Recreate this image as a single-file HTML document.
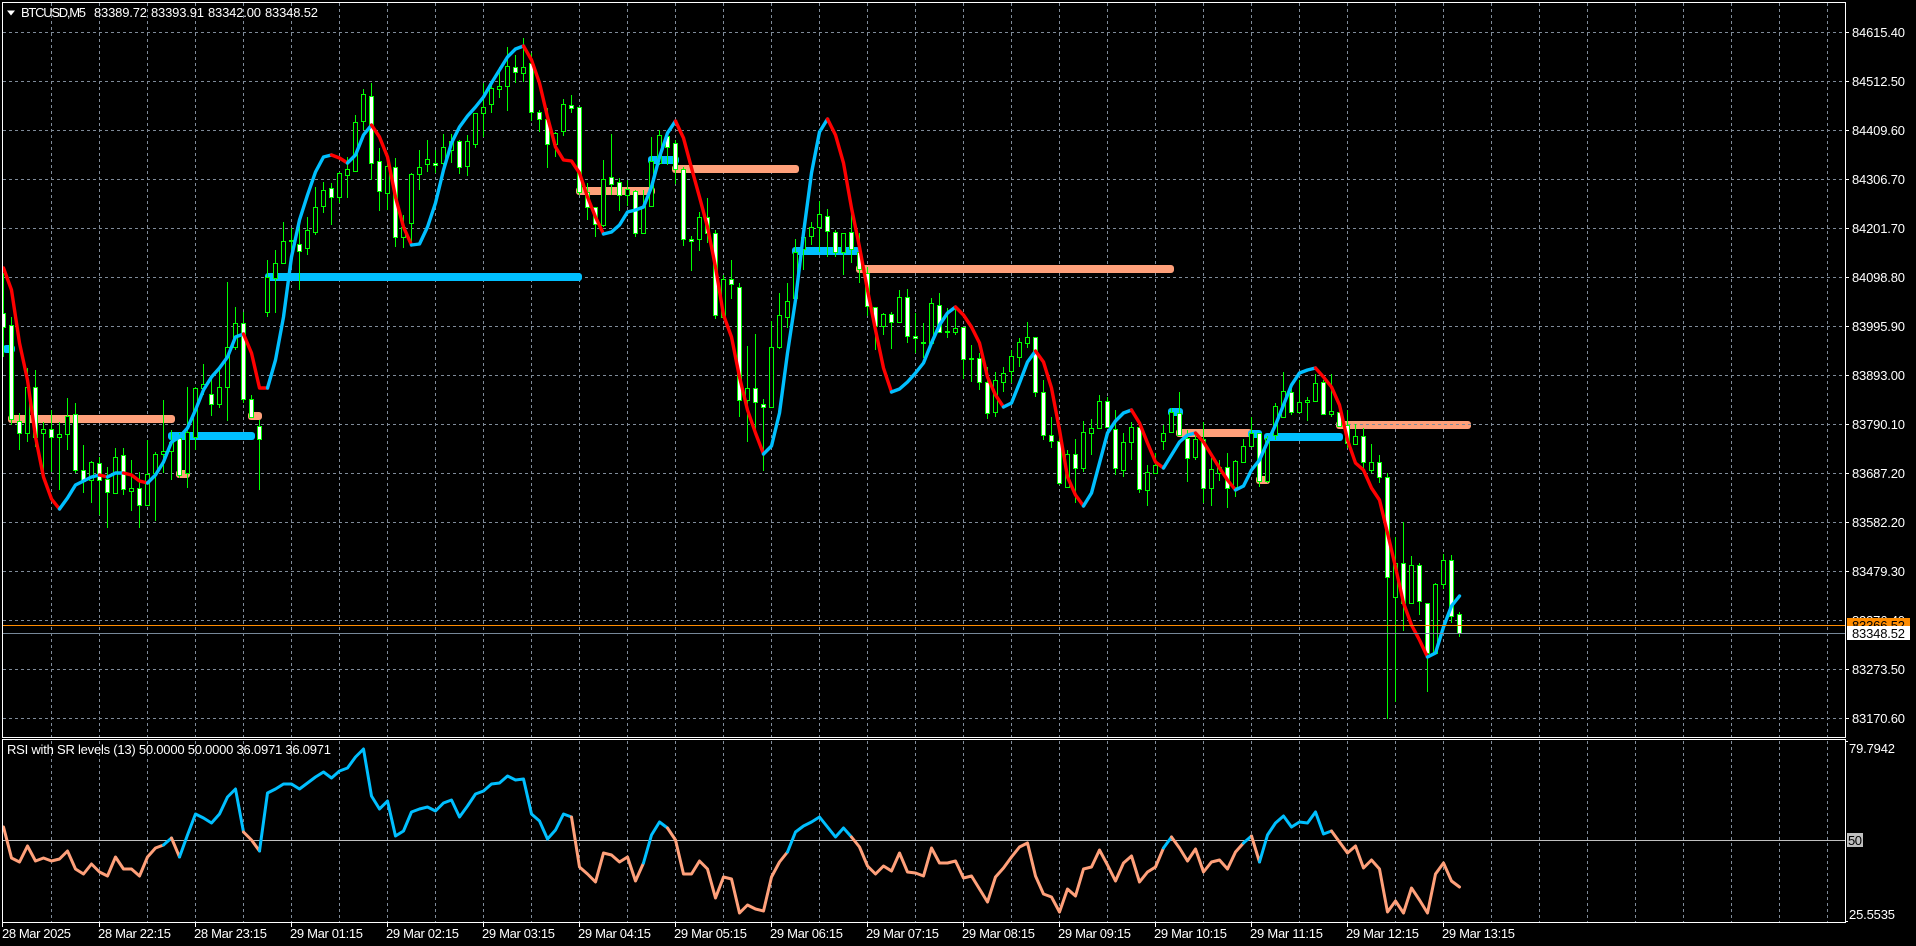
<!DOCTYPE html>
<html lang="en"><head><meta charset="utf-8"><title>BTCUSD,M5</title>
<style>
html,body{margin:0;padding:0;background:#000;width:1916px;height:946px;overflow:hidden}
svg{display:block}
text{font-family:"Liberation Sans",sans-serif;font-size:13px;fill:#fff}
.c{shape-rendering:crispEdges}
.l{fill:none;stroke-width:3.4;stroke-linejoin:round;stroke-linecap:round}
.r{stroke:#ff0000}.b{stroke:#00bfff}.s{stroke:#ffa07a}
.rs{fill:none;stroke-width:3;stroke-linejoin:round;stroke-linecap:round}
</style></head><body>
<svg width="1916" height="946" viewBox="0 0 1916 946" xmlns="http://www.w3.org/2000/svg">
<rect width="1916" height="946" fill="#000"/>
<!-- grid -->
<path class="c" fill="none" stroke="#7f8b99" stroke-width="1" stroke-dasharray="3 3" d="M3 32.5H1845M3 81.5H1845M3 130.5H1845M3 179.5H1845M3 228.5H1845M3 277.5H1845M3 326.5H1845M3 375.5H1845M3 424.5H1845M3 473.5H1845M3 522.5H1845M3 571.5H1845M3 620.5H1845M3 669.5H1845M3 718.5H1845"/>
<path class="c" fill="none" stroke="#7f8b99" stroke-width="1" stroke-dasharray="3 3" d="M51.5 3V922M99.5 3V922M147.5 3V922M195.5 3V922M243.5 3V922M291.5 3V922M339.5 3V922M387.5 3V922M435.5 3V922M483.5 3V922M531.5 3V922M579.5 3V922M627.5 3V922M675.5 3V922M723.5 3V922M771.5 3V922M819.5 3V922M867.5 3V922M915.5 3V922M963.5 3V922M1011.5 3V922M1059.5 3V922M1107.5 3V922M1155.5 3V922M1203.5 3V922M1251.5 3V922M1299.5 3V922M1347.5 3V922M1395.5 3V922M1443.5 3V922M1491.5 3V922M1539.5 3V922M1587.5 3V922M1635.5 3V922M1683.5 3V922M1731.5 3V922M1779.5 3V922M1827.5 3V922"/>
<!-- SR bars -->
<g fill="#ffa07a">
<rect x="8" y="415" width="167" height="8" rx="3"/><rect x="248" y="412" width="14" height="8" rx="3"/><rect x="176" y="470" width="14" height="8" rx="3"/><rect x="576" y="187" width="79" height="8" rx="3"/><rect x="672" y="165" width="127" height="8" rx="3"/><rect x="856" y="265" width="318" height="8" rx="3"/><rect x="1176" y="429" width="76" height="8" rx="3"/><rect x="1256" y="476" width="14" height="8" rx="3"/><rect x="1336" y="421" width="135" height="8" rx="3"/>
</g>
<g fill="#00bfff">
<rect x="3" y="345" width="12" height="8" rx="3"/><rect x="168" y="432" width="87" height="8" rx="3"/><rect x="265" y="273" width="317" height="8" rx="3"/><rect x="648" y="156" width="31" height="8" rx="3"/><rect x="792" y="247" width="68" height="8" rx="3"/><rect x="1168" y="408" width="15" height="8" rx="3"/><rect x="1248" y="430" width="14" height="8" rx="3"/><rect x="1264" y="433" width="79" height="8" rx="3"/>
</g>
<path class="c" fill="none" stroke="#7f8b99" stroke-dasharray="3 3" d="M1336 424.5H1471"/>
<!-- wicks -->
<path class="c" fill="none" stroke="#00ff00" stroke-width="1" d="M3.5 273V357M11.5 317V425M19.5 413V450M27.5 368V442M35.5 370V447M43.5 422V473M51.5 410V472M59.5 422V490M67.5 398V450M75.5 403V473M83.5 445V493M91.5 461V503M99.5 457V515M107.5 467V528M115.5 448V493M123.5 448V495M131.5 460V511M139.5 472V528M147.5 440V505M155.5 452V521M163.5 400V473M171.5 430V480M179.5 433V478M187.5 387V488M195.5 387V450M203.5 364V395M211.5 375V416M219.5 370V408M227.5 282V421M235.5 307V350M243.5 312V403M251.5 395V418M259.5 420V490M267.5 260V317M275.5 250V313M283.5 222V263M291.5 228V267M299.5 223V290M307.5 217V255M315.5 187V235M323.5 182V213M331.5 183V225M339.5 172V203M347.5 157V198M355.5 115V171M363.5 89V130M371.5 83V180M379.5 148V211M387.5 153V210M395.5 158V247M403.5 215V248M411.5 173V245M419.5 150V190M427.5 140V172M435.5 150V173M443.5 134V173M451.5 134V163M459.5 140V174M467.5 135V176M475.5 113V148M483.5 83V137M491.5 85V113M499.5 67V98M507.5 47V111M515.5 55V83M523.5 38V82M531.5 53V121M539.5 110V132M547.5 108V168M555.5 132V157M563.5 99V136M571.5 95V113M579.5 107V195M587.5 183V220M595.5 207V237M603.5 160V227M611.5 134V195M619.5 178V211M627.5 180V206M635.5 190V237M643.5 190V233M651.5 137V206M659.5 130V165M667.5 131V165M675.5 140V184M683.5 167V246M691.5 236V271M699.5 212V251M707.5 198V243M715.5 230V319M723.5 275V317M731.5 260V299M739.5 283V417M747.5 346V442M755.5 334V433M763.5 399V471M771.5 321V407M779.5 293V349M787.5 283V328M795.5 239V298M803.5 237V270M811.5 222V245M819.5 201V252M827.5 209V257M835.5 230V257M843.5 233V275M851.5 208V263M859.5 233V283M867.5 267V316M875.5 307V350M883.5 313V335M891.5 312V349M899.5 290V323M907.5 289V343M915.5 313V353M923.5 323V358M931.5 298V343M939.5 293V333M947.5 308V338M955.5 307V335M963.5 327V379M971.5 345V382M979.5 353V390M987.5 367V419M995.5 372V417M1003.5 367V392M1011.5 350V383M1019.5 338V367M1027.5 322V348M1035.5 337V397M1043.5 380V440M1051.5 417V448M1059.5 430V485M1067.5 450V487M1075.5 439V503M1083.5 421V472M1091.5 419V455M1099.5 395V428M1107.5 397V428M1115.5 410V475M1123.5 433V477M1131.5 422V460M1139.5 423V493M1147.5 465V506M1155.5 453V473M1163.5 425V450M1171.5 408V432M1179.5 392V435M1187.5 430V482M1195.5 435V460M1203.5 422V503M1211.5 458V506M1219.5 460V481M1227.5 453V508M1235.5 460V497M1243.5 439V463M1251.5 417V447M1259.5 433V487M1267.5 436V483M1275.5 403V440M1283.5 372V417M1291.5 383V415M1299.5 380V412M1307.5 397V421M1315.5 374V402M1323.5 380V414M1331.5 374V417M1339.5 412V427M1347.5 410V448M1355.5 424V445M1363.5 428V470M1371.5 444V473M1379.5 455V483M1387.5 473V719M1395.5 537V702M1403.5 522V631M1411.5 556V603M1419.5 563V615M1427.5 603V692M1435.5 583V653M1443.5 554V589M1451.5 555V623M1459.5 612V637"/>
<!-- white bodies -->
<path class="c" fill="#fff" stroke="#00ff00" stroke-width="1" d="M1.5 313.5h4V327.5h-4zM9.5 325.5h4V419.5h-4zM17.5 421.5h4V433.5h-4zM33.5 387.5h4V437.5h-4zM49.5 429.5h4V437.5h-4zM73.5 414.5h4V470.5h-4zM81.5 470.5h4V481.5h-4zM97.5 463.5h4V480.5h-4zM105.5 479.5h4V492.5h-4zM121.5 455.5h4V489.5h-4zM137.5 488.5h4V505.5h-4zM177.5 438.5h4V475.5h-4zM209.5 394.5h4V404.5h-4zM241.5 323.5h4V399.5h-4zM249.5 399.5h4V417.5h-4zM257.5 426.5h4V439.5h-4zM297.5 244.5h4V251.5h-4zM329.5 188.5h4V197.5h-4zM369.5 96.5h4V163.5h-4zM377.5 161.5h4V191.5h-4zM393.5 167.5h4V237.5h-4zM433.5 163.5h4V165.5h-4zM457.5 141.5h4V167.5h-4zM513.5 67.5h4V72.5h-4zM529.5 63.5h4V112.5h-4zM537.5 112.5h4V119.5h-4zM545.5 119.5h4V144.5h-4zM569.5 105.5h4V108.5h-4zM577.5 107.5h4V192.5h-4zM585.5 192.5h4V207.5h-4zM593.5 207.5h4V224.5h-4zM609.5 177.5h4V184.5h-4zM617.5 182.5h4V195.5h-4zM633.5 191.5h4V233.5h-4zM665.5 136.5h4V147.5h-4zM673.5 143.5h4V169.5h-4zM681.5 169.5h4V239.5h-4zM689.5 239.5h4V241.5h-4zM705.5 217.5h4V233.5h-4zM713.5 233.5h4V315.5h-4zM729.5 279.5h4V284.5h-4zM737.5 287.5h4V400.5h-4zM753.5 388.5h4V402.5h-4zM761.5 404.5h4V407.5h-4zM825.5 216.5h4V231.5h-4zM833.5 232.5h4V252.5h-4zM849.5 232.5h4V249.5h-4zM857.5 252.5h4V269.5h-4zM865.5 273.5h4V306.5h-4zM873.5 307.5h4V326.5h-4zM889.5 314.5h4V322.5h-4zM905.5 297.5h4V336.5h-4zM913.5 336.5h4V338.5h-4zM937.5 305.5h4V332.5h-4zM961.5 327.5h4V359.5h-4zM969.5 358.5h4V359.5h-4zM977.5 358.5h4V382.5h-4zM985.5 382.5h4V413.5h-4zM1033.5 337.5h4V392.5h-4zM1041.5 392.5h4V435.5h-4zM1049.5 435.5h4V441.5h-4zM1057.5 441.5h4V483.5h-4zM1073.5 454.5h4V468.5h-4zM1105.5 401.5h4V427.5h-4zM1113.5 429.5h4V468.5h-4zM1137.5 427.5h4V489.5h-4zM1177.5 413.5h4V435.5h-4zM1185.5 438.5h4V458.5h-4zM1201.5 439.5h4V488.5h-4zM1225.5 467.5h4V488.5h-4zM1257.5 433.5h4V481.5h-4zM1289.5 392.5h4V412.5h-4zM1321.5 382.5h4V414.5h-4zM1337.5 412.5h4V426.5h-4zM1345.5 425.5h4V443.5h-4zM1361.5 436.5h4V462.5h-4zM1377.5 462.5h4V477.5h-4zM1385.5 477.5h4V577.5h-4zM1401.5 563.5h4V603.5h-4zM1417.5 565.5h4V601.5h-4zM1425.5 603.5h4V653.5h-4zM1449.5 560.5h4V616.5h-4zM1457.5 614.5h4V633.5h-4z"/>
<!-- hollow bodies -->
<path class="c" fill="#000" stroke="#00ff00" stroke-width="1" d="M25.5 387.5h4V433.5h-4zM41.5 429.5h4V433.5h-4zM57.5 434.5h4V437.5h-4zM65.5 416.5h4V434.5h-4zM89.5 462.5h4V480.5h-4zM113.5 457.5h4V493.5h-4zM129.5 488.5h4V491.5h-4zM145.5 474.5h4V505.5h-4zM153.5 454.5h4V473.5h-4zM161.5 451.5h4V454.5h-4zM169.5 442.5h4V451.5h-4zM185.5 432.5h4V473.5h-4zM193.5 388.5h4V437.5h-4zM201.5 384.5h4V388.5h-4zM217.5 387.5h4V404.5h-4zM225.5 347.5h4V387.5h-4zM233.5 323.5h4V347.5h-4zM265.5 277.5h4V312.5h-4zM273.5 263.5h4V278.5h-4zM281.5 241.5h4V263.5h-4zM289.5 240.5h4V241.5h-4zM305.5 230.5h4V248.5h-4zM313.5 207.5h4V232.5h-4zM321.5 190.5h4V206.5h-4zM337.5 173.5h4V197.5h-4zM345.5 169.5h4V175.5h-4zM353.5 122.5h4V171.5h-4zM361.5 94.5h4V121.5h-4zM385.5 166.5h4V193.5h-4zM401.5 227.5h4V237.5h-4zM409.5 174.5h4V223.5h-4zM417.5 167.5h4V174.5h-4zM425.5 159.5h4V164.5h-4zM441.5 147.5h4V163.5h-4zM449.5 141.5h4V150.5h-4zM465.5 141.5h4V166.5h-4zM473.5 113.5h4V144.5h-4zM481.5 107.5h4V113.5h-4zM489.5 88.5h4V104.5h-4zM497.5 86.5h4V89.5h-4zM505.5 66.5h4V86.5h-4zM521.5 67.5h4V73.5h-4zM553.5 133.5h4V144.5h-4zM561.5 104.5h4V131.5h-4zM601.5 179.5h4V225.5h-4zM625.5 189.5h4V195.5h-4zM641.5 206.5h4V233.5h-4zM649.5 161.5h4V206.5h-4zM657.5 135.5h4V163.5h-4zM697.5 217.5h4V239.5h-4zM721.5 279.5h4V317.5h-4zM745.5 388.5h4V400.5h-4zM769.5 347.5h4V407.5h-4zM777.5 315.5h4V347.5h-4zM785.5 301.5h4V317.5h-4zM793.5 252.5h4V298.5h-4zM801.5 237.5h4V249.5h-4zM809.5 227.5h4V236.5h-4zM817.5 214.5h4V227.5h-4zM841.5 233.5h4V252.5h-4zM881.5 314.5h4V326.5h-4zM897.5 297.5h4V322.5h-4zM921.5 342.5h4V343.5h-4zM929.5 303.5h4V343.5h-4zM945.5 331.5h4V332.5h-4zM953.5 328.5h4V332.5h-4zM993.5 380.5h4V412.5h-4zM1001.5 373.5h4V382.5h-4zM1009.5 356.5h4V371.5h-4zM1017.5 342.5h4V357.5h-4zM1025.5 337.5h4V343.5h-4zM1065.5 454.5h4V487.5h-4zM1081.5 432.5h4V468.5h-4zM1089.5 428.5h4V433.5h-4zM1097.5 401.5h4V428.5h-4zM1121.5 442.5h4V470.5h-4zM1129.5 427.5h4V442.5h-4zM1145.5 472.5h4V490.5h-4zM1153.5 465.5h4V473.5h-4zM1161.5 433.5h4V441.5h-4zM1169.5 412.5h4V432.5h-4zM1193.5 439.5h4V457.5h-4zM1209.5 469.5h4V488.5h-4zM1217.5 467.5h4V473.5h-4zM1233.5 461.5h4V487.5h-4zM1241.5 446.5h4V462.5h-4zM1249.5 433.5h4V446.5h-4zM1265.5 438.5h4V481.5h-4zM1273.5 406.5h4V435.5h-4zM1281.5 391.5h4V417.5h-4zM1297.5 402.5h4V412.5h-4zM1305.5 400.5h4V402.5h-4zM1313.5 383.5h4V401.5h-4zM1329.5 411.5h4V414.5h-4zM1353.5 436.5h4V444.5h-4zM1369.5 462.5h4V470.5h-4zM1393.5 563.5h4V597.5h-4zM1409.5 565.5h4V603.5h-4zM1433.5 584.5h4V653.5h-4zM1441.5 560.5h4V584.5h-4z"/>
<!-- HMA curve -->
<g class="l">
<polyline class="r" points="3.5,268 11.5,290 19.5,343 27.5,380 35.5,437 43.5,477 51.5,499 59.5,509"/>
<polyline class="b" points="59.5,509 67.5,498 75.5,485 83.5,481 91.5,477 99.5,475"/>
<polyline class="r" points="99.5,475 107.5,477"/>
<polyline class="b" points="107.5,477 115.5,473 123.5,473"/>
<polyline class="r" points="123.5,473 131.5,475 139.5,481 147.5,483"/>
<polyline class="b" points="147.5,483 155.5,475 163.5,462 171.5,442 179.5,437 187.5,428 195.5,410 203.5,390 211.5,377 219.5,368 227.5,357 235.5,337 243.5,334"/>
<polyline class="r" points="243.5,334 251.5,353 259.5,388 267.5,388"/>
<polyline class="b" points="267.5,388 275.5,360 283.5,317 291.5,257 299.5,220 307.5,195 315.5,172 323.5,157 331.5,155"/>
<polyline class="r" points="331.5,155 339.5,158 347.5,163"/>
<polyline class="b" points="347.5,163 355.5,155 363.5,135 371.5,125"/>
<polyline class="r" points="371.5,125 379.5,137 387.5,157 395.5,197 403.5,227 411.5,245"/>
<polyline class="b" points="411.5,245 419.5,244 427.5,227 435.5,203 443.5,170 451.5,143 459.5,127 467.5,116 475.5,107 483.5,97 491.5,83 499.5,70 507.5,57 515.5,49 523.5,46"/>
<polyline class="r" points="523.5,46 531.5,60 539.5,83 547.5,117 555.5,147 563.5,160 571.5,161 579.5,173 587.5,197 595.5,217 603.5,234"/>
<polyline class="b" points="603.5,234 611.5,232 619.5,225 627.5,212 635.5,210 643.5,207 651.5,187 659.5,157 667.5,133 675.5,121"/>
<polyline class="r" points="675.5,121 683.5,138 691.5,168 699.5,197 707.5,227 715.5,267 723.5,315 731.5,337 739.5,377 747.5,410 755.5,433 763.5,454"/>
<polyline class="b" points="763.5,454 771.5,446 779.5,413 787.5,353 795.5,300 803.5,233 811.5,173 819.5,132 827.5,119"/>
<polyline class="r" points="827.5,119 835.5,135 843.5,163 851.5,208 859.5,247 867.5,290 875.5,330 883.5,368 891.5,392"/>
<polyline class="b" points="891.5,392 899.5,389 907.5,382 915.5,373 923.5,363 931.5,343 939.5,325 947.5,313 955.5,307"/>
<polyline class="r" points="955.5,307 963.5,315 971.5,327 979.5,343 987.5,377 995.5,395 1003.5,407"/>
<polyline class="b" points="1003.5,407 1011.5,403 1019.5,383 1027.5,362 1035.5,351"/>
<polyline class="r" points="1035.5,351 1043.5,362 1051.5,388 1059.5,430 1067.5,477 1075.5,495 1083.5,506"/>
<polyline class="b" points="1083.5,506 1091.5,493 1099.5,463 1107.5,433 1115.5,421 1123.5,413 1131.5,410"/>
<polyline class="r" points="1131.5,410 1139.5,423 1147.5,443 1155.5,462 1163.5,468"/>
<polyline class="b" points="1163.5,468 1171.5,455 1179.5,442 1187.5,435 1195.5,433"/>
<polyline class="r" points="1195.5,433 1203.5,442 1211.5,455 1219.5,468 1227.5,480 1235.5,490"/>
<polyline class="b" points="1235.5,490 1243.5,486 1251.5,470 1259.5,460 1267.5,442 1275.5,425 1283.5,405 1291.5,385 1299.5,373 1307.5,370 1315.5,368"/>
<polyline class="r" points="1315.5,368 1323.5,377 1331.5,387 1339.5,405 1347.5,440 1355.5,463 1363.5,470 1371.5,488 1379.5,500 1387.5,533 1395.5,567 1403.5,603 1411.5,625 1419.5,640 1427.5,657"/>
<polyline class="b" points="1427.5,657 1435.5,653 1443.5,627 1451.5,606 1459.5,596"/>
</g>
<!-- price lines -->
<rect class="c" x="3" y="625" width="1842" height="1" fill="#ff8c00"/>
<rect class="c" x="3" y="633" width="1842" height="1" fill="#778899"/>
<rect class="c" x="3" y="840" width="1842" height="1" fill="#c0c0c0"/>
<!-- RSI -->
<g class="rs">
<polyline class="s" points="3.5,827 11.5,858 19.5,862 27.5,846 35.5,861 43.5,858 51.5,861 59.5,859 67.5,851 75.5,869 83.5,874 91.5,864 99.5,872 107.5,876 115.5,857 123.5,869 131.5,869 139.5,876 147.5,857 155.5,848 163.5,845"/>
<polyline class="b" points="163.5,845 171.5,838"/>
<polyline class="s" points="171.5,838 179.5,857"/>
<polyline class="b" points="179.5,857 187.5,835 195.5,814 203.5,818 211.5,823 219.5,814 227.5,797 235.5,789 243.5,832"/>
<polyline class="s" points="243.5,832 251.5,840 259.5,851"/>
<polyline class="b" points="259.5,851 267.5,793 275.5,789 283.5,784 291.5,784 299.5,789 307.5,783 315.5,777 323.5,772 331.5,778 339.5,771 347.5,768 355.5,757 363.5,749 371.5,796 379.5,809 387.5,801 395.5,836 403.5,831 411.5,812 419.5,809 427.5,807 435.5,811 443.5,803 451.5,800 459.5,817 467.5,806 475.5,794 483.5,791 491.5,784 499.5,783 507.5,776 515.5,780 523.5,779 531.5,814 539.5,821 547.5,839 555.5,830 563.5,814 571.5,817"/>
<polyline class="s" points="571.5,817 579.5,867 587.5,874 595.5,882 603.5,853 611.5,855 619.5,862 627.5,857 635.5,881 643.5,863"/>
<polyline class="b" points="643.5,863 651.5,835 659.5,822 667.5,828"/>
<polyline class="s" points="667.5,828 675.5,840 683.5,874 691.5,874 699.5,861 707.5,869 715.5,898 723.5,877 731.5,879 739.5,913 747.5,905 755.5,909 763.5,911 771.5,877 779.5,862 787.5,852"/>
<polyline class="b" points="787.5,852 795.5,832 803.5,826 811.5,822 819.5,817 827.5,827 835.5,837 843.5,828 851.5,837"/>
<polyline class="s" points="851.5,837 859.5,847 867.5,866 875.5,874 883.5,866 891.5,871 899.5,853 907.5,872 915.5,873 923.5,876 931.5,848 939.5,863 947.5,863 955.5,861 963.5,878 971.5,876 979.5,889 987.5,902 995.5,877 1003.5,868 1011.5,857 1019.5,847 1027.5,843 1035.5,876 1043.5,894 1051.5,897 1059.5,912 1067.5,889 1075.5,896 1083.5,869 1091.5,867 1099.5,850 1107.5,865 1115.5,881 1123.5,863 1131.5,856 1139.5,882 1147.5,872 1155.5,867 1163.5,848"/>
<polyline class="b" points="1163.5,848 1171.5,837"/>
<polyline class="s" points="1171.5,837 1179.5,848 1187.5,861 1195.5,849 1203.5,872 1211.5,862 1219.5,860 1227.5,869 1235.5,852 1243.5,843"/>
<polyline class="b" points="1243.5,843 1251.5,836"/>
<polyline class="s" points="1251.5,836 1259.5,862"/>
<polyline class="b" points="1259.5,862 1267.5,835 1275.5,823 1283.5,816 1291.5,827 1299.5,822 1307.5,823 1315.5,812 1323.5,834 1331.5,831"/>
<polyline class="s" points="1331.5,831 1339.5,842 1347.5,853 1355.5,846 1363.5,868 1371.5,860 1379.5,869 1387.5,912 1395.5,901 1403.5,913 1411.5,888 1419.5,900 1427.5,913 1435.5,874 1443.5,863 1451.5,881 1459.5,887"/>
</g>
<!-- frame -->
<rect x="0" y="0" width="2" height="946" fill="#000"/>
<rect x="1846" y="0" width="70" height="946" fill="#000"/>
<rect x="0" y="923" width="1846" height="23" fill="#000"/>
<rect x="0" y="738" width="1846" height="1" fill="#000"/>
<path class="c" fill="none" stroke="#fff" stroke-width="1" d="M2 2.5H1846M2.5 2V738M1845.5 2V738M2 737.5H1846M2 739.5H1846M2.5 739V923M1845.5 739V923M2 922.5H1846"/>
<path class="c" fill="none" stroke="#fff" stroke-width="1" d="M1846 32.5h3M1846 81.5h3M1846 130.5h3M1846 179.5h3M1846 228.5h3M1846 277.5h3M1846 326.5h3M1846 375.5h3M1846 424.5h3M1846 473.5h3M1846 522.5h3M1846 571.5h3M1846 669.5h3M1846 718.5h3M1846 741.5h2M1846 921.5h2"/>
<path class="c" fill="none" stroke="#fff" stroke-width="1" d="M2.5 923v4M99.5 923v4M195.5 923v4M291.5 923v4M387.5 923v4M483.5 923v4M579.5 923v4M675.5 923v4M771.5 923v4M867.5 923v4M963.5 923v4M1059.5 923v4M1155.5 923v4M1251.5 923v4M1347.5 923v4M1443.5 923v4"/>
<!-- header -->
<path d="M7 10.5h8l-4 5z" fill="#fff"/>
<text x="21" y="17" textLength="65">BTCUSD,M5</text>
<text x="94" y="17" textLength="53">83389.72</text>
<text x="151" y="17" textLength="53">83393.91</text>
<text x="208" y="17" textLength="53">83342.00</text>
<text x="265" y="17" textLength="53">83348.52</text>
<text x="7" y="754" textLength="324">RSI with SR levels (13) 50.0000 50.0000 36.0971 36.0971</text>
<!-- price axis -->
<g>
<text x="1852" y="37" textLength="53">84615.40</text>
<text x="1852" y="86" textLength="53">84512.50</text>
<text x="1852" y="135" textLength="53">84409.60</text>
<text x="1852" y="184" textLength="53">84306.70</text>
<text x="1852" y="233" textLength="53">84201.70</text>
<text x="1852" y="282" textLength="53">84098.80</text>
<text x="1852" y="331" textLength="53">83995.90</text>
<text x="1852" y="380" textLength="53">83893.00</text>
<text x="1852" y="429" textLength="53">83790.10</text>
<text x="1852" y="478" textLength="53">83687.20</text>
<text x="1852" y="527" textLength="53">83582.20</text>
<text x="1852" y="576" textLength="53">83479.30</text>
<text x="1852" y="625" textLength="53">83376.40</text>
<text x="1852" y="674" textLength="53">83273.50</text>
<text x="1852" y="723" textLength="53">83170.60</text>
</g>
<rect class="c" x="1847" y="618" width="63" height="8" fill="#ff8c00"/>
<text x="1852" y="630" textLength="53" style="fill:#000">83366.52</text>
<rect class="c" x="1847" y="626" width="63" height="14" fill="#fff"/>
<text x="1852" y="638" textLength="53" style="fill:#000">83348.52</text>
<text x="1849" y="753" textLength="46">79.7942</text>
<rect class="c" x="1847" y="833" width="16" height="14" fill="#c0c0c0"/>
<text x="1848" y="845" textLength="14" style="fill:#000">50</text>
<text x="1849" y="919" textLength="46">25.5535</text>
<!-- time axis -->
<g>
<text x="2" y="938" textLength="69">28 Mar 2025</text>
<text x="98" y="938" textLength="73">28 Mar 22:15</text>
<text x="194" y="938" textLength="73">28 Mar 23:15</text>
<text x="290" y="938" textLength="73">29 Mar 01:15</text>
<text x="386" y="938" textLength="73">29 Mar 02:15</text>
<text x="482" y="938" textLength="73">29 Mar 03:15</text>
<text x="578" y="938" textLength="73">29 Mar 04:15</text>
<text x="674" y="938" textLength="73">29 Mar 05:15</text>
<text x="770" y="938" textLength="73">29 Mar 06:15</text>
<text x="866" y="938" textLength="73">29 Mar 07:15</text>
<text x="962" y="938" textLength="73">29 Mar 08:15</text>
<text x="1058" y="938" textLength="73">29 Mar 09:15</text>
<text x="1154" y="938" textLength="73">29 Mar 10:15</text>
<text x="1250" y="938" textLength="73">29 Mar 11:15</text>
<text x="1346" y="938" textLength="73">29 Mar 12:15</text>
<text x="1442" y="938" textLength="73">29 Mar 13:15</text>
</g>
</svg>
</body></html>
